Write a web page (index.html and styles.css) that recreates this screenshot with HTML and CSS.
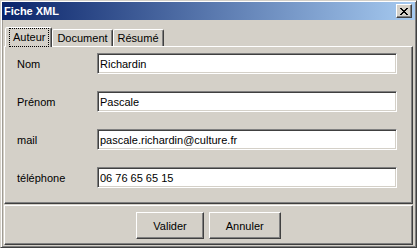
FILE: index.html
```html
<!DOCTYPE html>
<html lang="fr">
<head>
<meta charset="utf-8">
<title>Fiche XML</title>
<link rel="stylesheet" href="styles.css">
</head>
<body>
<div class="window">
  <div class="titlebar">
    <span class="title">Fiche XML</span>
    <button class="close" aria-label="Fermer">
      <svg width="8" height="7" viewBox="0 0 8 7" shape-rendering="crispEdges">
        <path d="M0 0h2v1h-2zM6 0h2v1h-2zM1 1h2v1h-2zM5 1h2v1h-2zM2 2h4v1h-4zM3 3h2v1h-2zM2 4h4v1h-4zM1 5h2v1h-2zM5 5h2v1h-2zM0 6h2v1h-2zM6 6h2v1h-2z" fill="#000"/>
      </svg>
    </button>
  </div>
  <div class="client">
    <div class="tabs">
      <div class="tab active"><span class="focus">Auteur</span></div>
      <div class="tab">Document</div>
      <div class="tab">Résumé</div>
    </div>
    <div class="panel">
      <div class="form">
        <label class="label">Nom</label>
        <input class="field" type="text" value="Richardin">
        <label class="label">Prénom</label>
        <input class="field" type="text" value="Pascale">
        <label class="label">mail</label>
        <input class="field" type="text" value="pascale.richardin@culture.fr">
        <label class="label">téléphone</label>
        <input class="field" type="text" value="06 76 65 65 15">
      </div>
    </div>
    <div class="actions">
      <button class="btn">Valider</button>
      <button class="btn">Annuler</button>
    </div>
  </div>
</div>
</body>
</html>
```

FILE: styles.css
```css
* { box-sizing: border-box; }
html, body { margin: 0; padding: 0; }
body {
  width: 417px;
  height: 248px;
  background: #d4d0c8;
  font-family: "Liberation Sans", Arial, sans-serif;
  font-size: 11px;
  color: #000;
}
.window {
  width: 417px;
  height: 248px;
  background: #d4d0c8;
  border: 1px solid;
  border-color: #d4d0c8 #404040 #404040 #d4d0c8;
  box-shadow: inset 1px 1px #fff, inset -1px -1px #808080;
  padding: 1px;
  display: flex;
  flex-direction: column;
}
.titlebar {
  height: 18px;
  flex: 0 0 auto;
  display: flex;
  align-items: center;
  justify-content: space-between;
  padding: 0 3px 0 2px;
  background: linear-gradient(to right, #0a246a, #a6caf0);
  color: #fff;
  font-weight: bold;
  font-size: 11px;
}
.close {
  width: 16px;
  height: 14px;
  padding: 0;
  margin: 0;
  background: #d4d0c8;
  border: 1px solid;
  border-color: #fff #404040 #404040 #fff;
  box-shadow: inset -1px -1px #808080;
  display: flex;
  align-items: center;
  justify-content: center;
}
.client {
  flex: 1;
  padding: 7px 2px 0 1px;
  border-left: 1px solid #a09c94;
  display: flex;
  flex-direction: column;
}
.tabs {
  display: flex;
  align-items: flex-end;
  height: 20px;
  margin-bottom: -1px;
  padding-left: 1px;
  position: relative;
  z-index: 1;
}
.tab {
  height: 17px;
  margin-bottom: 1px;
  padding: 0 4px;
  border: 1px solid;
  border-bottom: none;
  border-color: #fff #404040 transparent #fff;
  box-shadow: inset -1px 0 #808080;
  border-radius: 2px 2px 0 0;
  background: #d4d0c8;
  display: flex;
  align-items: center;
  white-space: nowrap;
}
.tab.active {
  height: 20px;
  margin-bottom: 0;
  padding: 0 2px 1px 3px;
}
.focus {
  border: 1px dotted #000;
  padding: 2px 3px 2px 3px;
  line-height: 13px;
}
.panel {
  height: 158px;
  flex: 0 0 auto;
  border: 1px solid;
  border-color: #fff #404040 #404040 #fff;
  box-shadow: inset -1px -1px #808080;
  padding: 6px 0 0 12px;
}
.form {
  display: grid;
  grid-template-columns: 80px 300px;
  grid-auto-rows: 21px;
  row-gap: 17px;
  align-items: center;
}
.label {
  font-size: 11px;
}
.field {
  width: 300px;
  height: 21px;
  margin: 0;
  padding: 0 2px;
  font-family: "Liberation Sans", Arial, sans-serif;
  font-size: 11px;
  color: #000;
  background: #fff;
  border: 1px solid;
  border-color: #808080 #fff #fff #808080;
  box-shadow: inset 1px 1px #404040, inset -1px -1px #d4d0c8;
  outline: none;
}
.actions {
  margin-top: 1px;
  height: 40px;
  flex: 0 0 auto;
  border: 1px solid;
  border-color: #fff #404040 #404040 #fff;
  box-shadow: inset -1px -1px #808080;
  padding-top: 6px;
  display: flex;
  justify-content: center;
  align-items: flex-start;
  gap: 5px;
}
.btn {
  height: 27px;
  margin: 0;
  padding: 0 16px;
  font-family: "Liberation Sans", Arial, sans-serif;
  font-size: 11px;
  color: #000;
  background: #d4d0c8;
  border: 1px solid;
  border-color: #fff #404040 #404040 #fff;
  box-shadow: inset -1px -1px #808080;
}
```
